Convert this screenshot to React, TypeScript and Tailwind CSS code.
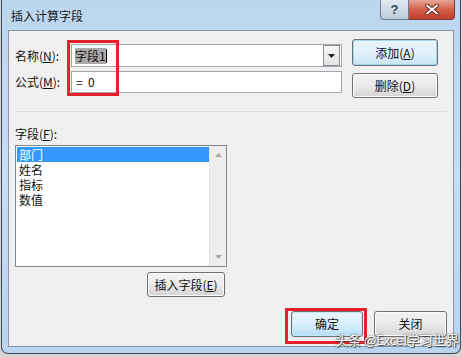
import React from "react";

const font = { fontFamily: '"Noto Sans CJK SC", "Liberation Sans", sans-serif' };

function Btn({ children, className = "" }: { children: React.ReactNode; className?: string }) {
  return (
    <div
      className={
        "flex items-center justify-center rounded-[3px] border border-[#707070] text-[12px] text-[#111] " +
        className
      }
    >
      {children}
    </div>
  );
}

export default function App() {
  return (
    <div className="relative w-[462px] h-[357px] overflow-hidden bg-[#d4d4d4]" style={font}>
      <div className="ml-[1px] w-[460px] h-[354px] rounded-b-[7px] border border-t-0 border-[#3e4a57] bg-gradient-to-b from-[#bcd6ef] via-[#c6ddf3] to-[#b9d4ee] px-[6px] flex flex-col">
        {/* title bar */}
        <div className="h-[30px] flex items-start justify-between">
          <div className="pl-[3px] pt-[7px] text-[12px] text-[#1a1a1a] leading-[18px]">插入计算字段</div>
          <div className="flex mr-[-1px]">
            <div className="w-[29px] h-[20px] rounded-bl-[4px] border border-t-0 border-[#6b7d92] bg-gradient-to-b from-[#e3ebf4] to-[#bccadb] flex items-center justify-center text-[13px] font-bold text-[#3b4756]" style={{ fontFamily: '"Liberation Sans", sans-serif' }}>
              ?
            </div>
            <div className="w-[46px] h-[20px] rounded-br-[4px] border border-t-0 border-l-0 border-[#7a3a30] bg-gradient-to-b from-[#e6a694] via-[#d2604a] to-[#c1402c] flex items-center justify-center">
              <svg width="14" height="11" viewBox="0 0 14 11">
                <path d="M2 1.5 L12 9.5 M12 1.5 L2 9.5" stroke="#5a1d14" strokeWidth="3.6" strokeLinecap="round" />
                <path d="M2 1.5 L12 9.5 M12 1.5 L2 9.5" stroke="#ffffff" strokeWidth="2" strokeLinecap="round" />
              </svg>
            </div>
          </div>
        </div>
        {/* client */}
        <div className="w-[446px] h-[317px] border border-[#8795a6] bg-[#f0f0f0] flex flex-col pl-[6px] pr-[6px]">
          <div className="flex pt-[8px]">
            <div className="flex flex-col pt-[5px] gap-[4px]">
              <div className="flex items-center">
                <div className="w-[56px] text-[12px] text-[#111]">
                  名称(<span className="underline">N</span>):
                </div>
                <div className="w-[271px] h-[23px] border border-[#a3a6ad] bg-white flex items-center">
                  <div className="flex-1 pl-[3px] flex items-center text-[12px] text-[#111]">
                    <span className="bg-[#a9a9a9] leading-[16px]">字段1</span>
                    <span className="w-[1px] h-[14px] bg-black" />
                  </div>
                  <div className="w-[17px] h-[21px] mr-[1px] border border-[#8a8d94] bg-gradient-to-b from-[#f6f6f6] to-[#e4e4e4] flex items-center justify-center">
                    <svg width="7" height="4" viewBox="0 0 7 4">
                      <path d="M0 0 H7 L3.5 4 Z" fill="#222" />
                    </svg>
                  </div>
                </div>
              </div>
              <div className="flex items-center">
                <div className="w-[56px] text-[12px] text-[#111]">
                  公式(<span className="underline">M</span>):
                </div>
                <div className="w-[271px] h-[22px] border border-[#a3a6ad] bg-white flex items-center pl-[4px] text-[12px] text-[#111]">
                  =&nbsp;&nbsp;0
                </div>
              </div>
            </div>
            <div className="ml-[10px] flex flex-col gap-[7px]">
              <Btn className="w-[86px] h-[27px] border-[#3c7fb1] bg-gradient-to-b from-[#eaf6fd] via-[#e2f0fa] to-[#c9e5f7] shadow-[inset_0_0_0_1px_#9fd7f5]">
                添加(<span className="underline">A</span>)
              </Btn>
              <Btn className="w-[86px] h-[25px] bg-gradient-to-b from-[#f2f2f2] via-[#ebebeb] to-[#d4d4d4] shadow-[inset_0_0_0_1px_#fcfcfc]">
                删除(<span className="underline">D</span>)
              </Btn>
            </div>
          </div>
          <div className="mt-[13px] ml-[1px] w-[431px] h-[1px] bg-[#d5dde5]" />
          <div className="mt-[14px] text-[12px] text-[#111] leading-[16px]">
            字段(<span className="underline">F</span>):
          </div>
          <div className="mt-[3px] w-[212px] h-[122px] border border-[#828790] bg-white flex">
            <div className="flex-1 pt-[1px] pl-[1px] text-[12px] text-[#111]">
              <div className="h-[15px] leading-[15px] bg-[#3399ff] text-white pl-[2px]">部门</div>
              <div className="h-[15px] leading-[15px] pl-[2px]">姓名</div>
              <div className="h-[15px] leading-[15px] pl-[2px]">指标</div>
              <div className="h-[15px] leading-[15px] pl-[2px]">数值</div>
            </div>
            <div className="w-[17px] bg-[#eeeeee] border-l border-[#e4e4e4] flex flex-col items-center justify-between py-[7px]">
              <svg width="7" height="4" viewBox="0 0 7 4">
                <path d="M0 4 H7 L3.5 0 Z" fill="#a8a8a8" />
              </svg>
              <svg width="7" height="4" viewBox="0 0 7 4">
                <path d="M0 0 H7 L3.5 4 Z" fill="#a8a8a8" />
              </svg>
            </div>
          </div>
          <div className="w-[212px] flex justify-end mt-[5px]">
            <Btn className="mr-[2px] w-[78px] h-[25px] bg-gradient-to-b from-[#f2f2f2] via-[#ebebeb] to-[#d4d4d4] shadow-[inset_0_0_0_1px_#fcfcfc]">
              插入字段(<span className="underline">E</span>)
            </Btn>
          </div>
          <div className="flex justify-end mt-[14px] gap-[11px] pr-[0px]">
            <Btn className="w-[72px] h-[26px] border-[#3c7fb1] bg-gradient-to-b from-[#eaf6fd] via-[#d9f0fc] to-[#b4dcf5] shadow-[inset_0_0_0_1px_#c2e6fb]">
              确定
            </Btn>
            <Btn className="w-[73px] h-[26px] bg-gradient-to-b from-[#f2f2f2] via-[#ebebeb] to-[#d4d4d4] shadow-[inset_0_0_0_1px_#fcfcfc]">
              关闭
            </Btn>
          </div>
        </div>
      </div>
      {/* red highlight boxes */}
      <div className="absolute left-[67px] top-[40px] w-[52px] h-[56px] border-[3px] border-[#e8202a]" />
      <div className="absolute left-[285px] top-[308px] w-[82px] h-[36px] border-[3px] border-[#e8202a]" />
      {/* watermark */}
      <div
        className="absolute left-[335px] top-[332px] text-[13px] text-white leading-[16px] whitespace-nowrap"
        style={{ textShadow: "0 0 2px #333, 1px 1px 1px #444" }}
      >
        头条 @Excel学习世界
      </div>
    </div>
  );
}
